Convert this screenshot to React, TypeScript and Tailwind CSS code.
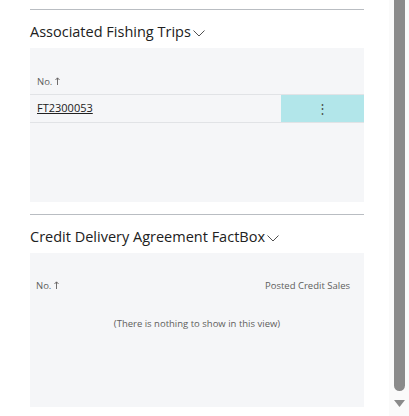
function Heading({ title }: { title: string }) {
  return (
    <div className="flex items-center h-[22px] mt-[11px] mb-[5px]">
      <span className="text-[14.5px] leading-[22px] text-[#212121]">{title}</span>
      <svg className="ml-[2px] mt-[3px]" width="12" height="7" viewBox="0 0 12 7" fill="none">
        <polyline points="0.5,0.5 6,6 11.5,0.5" stroke="#505050" strokeWidth="1" />
      </svg>
    </div>
  );
}

function SortLabel() {
  return (
    <span className="flex items-center gap-[3px] text-[9.5px] text-[#605e5c]">
      No.
      <svg width="5" height="8" viewBox="0 0 5 8" fill="none" className="mb-[1px]">
        <path d="M2.5 8V1M0.5 3L2.5 0.8L4.5 3" stroke="#605e5c" strokeWidth="0.9" />
      </svg>
    </span>
  );
}

export default function App() {
  return (
    <div
      className="flex w-[409px] h-[416px] bg-white overflow-hidden"
      style={{ fontFamily: '"Open Sans", "Noto Sans", sans-serif' }}
    >
      <div className="flex flex-col w-[364px] pl-[30px] pt-[9px]">
        <div className="border-t border-[#b9bdc2]" />
        <Heading title="Associated Fishing Trips" />
        <div className="h-[154px] bg-[#f5f6f8] flex flex-col">
          <div className="h-[47px] flex items-end pb-[5px] pl-[7px] border-b border-[#e1e3e6]">
            <SortLabel />
          </div>
          <div className="flex h-[28px] border-b border-[#e1e3e6]">
            <div className="flex-1 flex items-center pl-[7px]">
              <span className="text-[11px] text-[#212121] underline">FT2300053</span>
            </div>
            <div className="w-[83px] bg-[#b2e6ea] flex items-center justify-center">
              <span className="text-[13px] text-[#505050] leading-none">⋮</span>
            </div>
          </div>
        </div>
        <div className="mt-[12px] border-t border-[#b9bdc2]" />
        <Heading title="Credit Delivery Agreement FactBox" />
        <div className="h-[154px] bg-[#f5f6f8] flex flex-col">
          <div className="h-[40px] flex items-end justify-between pl-[6px] pr-[14px]">
            <SortLabel />
            <span className="text-[9.5px] text-[#605e5c]">Posted Credit Sales</span>
          </div>
          <div className="mt-[24px] text-center text-[9.5px] text-[#605e5c]">
            (There is nothing to show in this view)
          </div>
        </div>
      </div>
      <div className="ml-auto w-[20px] h-full bg-[#fafafa] flex flex-col items-center">
        <div className="w-[11px] h-[391px] bg-[#8a8a8a] rounded-b-[6px]" />
        <svg className="mt-[9px]" width="11" height="7" viewBox="0 0 11 7">
          <polygon points="0,0 11,0 5.5,7" fill="#8a8a8a" />
        </svg>
      </div>
    </div>
  );
}
